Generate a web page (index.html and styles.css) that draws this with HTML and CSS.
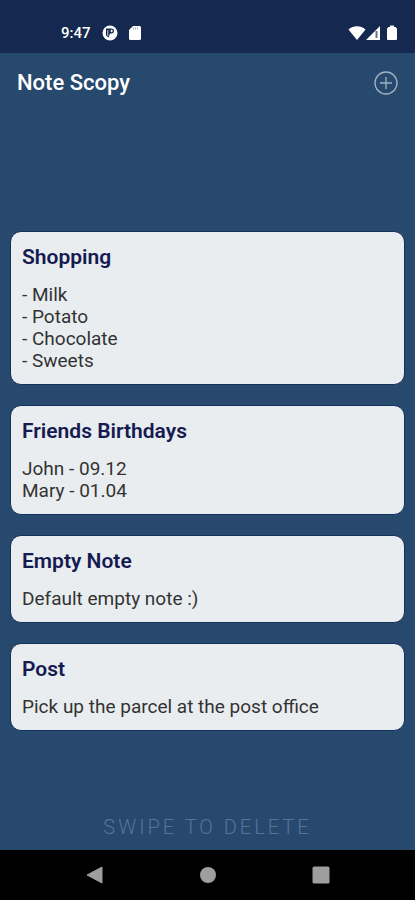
FILE: index.html
```html
<!DOCTYPE html>
<html lang="en">
  <head>
    <meta charset="utf-8" />
    <meta name="viewport" content="width=device-width, initial-scale=1.0" />
    <title>Note Scopy</title>
    <link rel="stylesheet" href="styles.css">
  </head>

  <body>
    <div class="status-bar">
      <div class="status-left">
        <span class="clock">9:47</span>
        <svg width="16" height="16" viewBox="0 0 16 16">
          <circle cx="8" cy="8" r="7.5" fill="#fff" />
          <path d="M4 3.500h5.500a2.500 2.500 0 0 1 2.500 2.500c0 1.800-1.500 2.600-3.500 2.600H8L6.500 12.500 4 10.500z" fill="#142850" />
          <path d="M5.800 5v6M9 5.200h1.200v1.500H9z" fill="#fff" stroke="#fff" stroke-width="0.800" />
        </svg>
        <svg width="12" height="16" viewBox="0 0 12 16">
          <path d="M4 1h6.500a1.500 1.500 0 0 1 1.500 1.500v11a1.500 1.500 0 0 1-1.500 1.500h-9A1.500 1.500 0 0 1 0 13.500V5z" fill="#fff" />
          <path d="M4.500 2.500v2M6.500 2.500v2M8.500 2.500v2" stroke="#a4adbe" />
        </svg>
      </div>
      <div class="status-right">
        <svg width="18" height="16" viewBox="0 0 18 16">
          <path d="M0.500 4.500C5.500 0.200 12.500 0.200 17.500 4.500L9 15z" fill="#fff" />
        </svg>
        <svg width="14" height="16" viewBox="0 0 14 16">
          <path d="M14 1v14H0z" fill="#fff" />
          <path d="M10.500 6v7" stroke="#65718b" stroke-width="2" />
        </svg>
        <svg class="battery" width="10" height="16" viewBox="0 0 10 16">
          <path d="M3 0.500h4V2h1.500L10 3.500V14a1 1 0 0 1-1 1H1a1 1 0 0 1-1-1V3.500L1.500 2H3z" fill="#fff" />
        </svg>
      </div>
    </div>

    <header class="app-bar">
      <h1>Note Scopy</h1>
      <button class="add-btn" type="button" aria-label="Add note">
        <svg width="24" height="24" viewBox="0 0 24 24" fill="none" stroke="#a3b2c2" stroke-width="1.300">
          <circle cx="12" cy="12" r="11" />
          <path d="M12 6v12M6 12h12" />
        </svg>
      </button>
    </header>

    <main class="notes-screen">
      <div class="notes">
        <article class="note">
          <h2>Shopping</h2>
          <p>- Milk<br />- Potato<br />- Chocolate<br />- Sweets</p>
        </article>
        <article class="note">
          <h2>Friends Birthdays</h2>
          <p>John - 09.12<br />Mary - 01.04</p>
        </article>
        <article class="note">
          <h2>Empty Note</h2>
          <p>Default empty note :)</p>
        </article>
        <article class="note">
          <h2>Post</h2>
          <p>Pick up the parcel at the post office</p>
        </article>
      </div>
      <p class="hint">SWIPE TO DELETE</p>
    </main>

    <nav class="nav-bar">
      <button type="button" aria-label="Back">
        <svg width="18" height="18" viewBox="0 0 18 18">
          <path d="M16 1v16L1 9z" fill="#9e9e9e" stroke="#9e9e9e" stroke-linejoin="round" />
        </svg>
      </button>
      <button type="button" aria-label="Home">
        <svg width="18" height="18" viewBox="0 0 18 18">
          <circle cx="9" cy="9" r="8" fill="#9e9e9e" />
        </svg>
      </button>
      <button type="button" aria-label="Recent apps">
        <svg width="18" height="18" viewBox="0 0 18 18">
          <rect x="0.500" y="0.500" width="17" height="17" rx="1.500" fill="#9e9e9e" />
        </svg>
      </button>
    </nav>
  </body>
</html>
```

FILE: styles.css
```css
* {
  box-sizing: border-box;
}

body {
  display: flex;
  flex-direction: column;
  min-height: 100vh;
  margin: 0;
  background-color: #27496d;
  font-family: Roboto, sans-serif;
}

h1,
h2,
p {
  margin: 0;
}

svg {
  display: block;
}

button {
  padding: 0;
  border: none;
  background: none;
  cursor: pointer;
}

/* system status bar */
.status-bar {
  display: flex;
  justify-content: space-between;
  align-items: flex-end;
  height: 53px;
  padding: 0 18px 12px 61px;
  background-color: #142850;
  color: #fff;
}

.status-left {
  display: flex;
  align-items: center;
  gap: 11px;
}

.status-right {
  display: flex;
}

.clock {
  font-size: 15px;
  font-weight: 500;
  line-height: 16px;
}

.battery {
  margin-left: 7px;
}

/* title and add button */
.app-bar {
  display: flex;
  justify-content: space-between;
  align-items: center;
  height: 59px;
  padding: 1px 17px 0;
  color: #fff;
}

.app-bar h1 {
  font-size: 22px;
  font-weight: 500;
  line-height: 24px;
}

/* notes stay centered, the hint sits in the lower free space */
.notes-screen {
  display: grid;
  grid-template-rows: 1fr auto 1fr;
  flex: 1;
  padding: 0 10px;
}

.notes {
  display: flex;
  flex-direction: column;
  grid-row: 2;
  gap: 20px;
}

.note {
  padding: 13px 11px 12px;
  border: 1px solid #16305c;
  border-radius: 11px;
  background-color: #e9edf0;
}

.note h2 {
  margin-bottom: 15px;
  color: #151b50;
  font-size: 21px;
  font-weight: 600;
  line-height: 24px;
}

.note p {
  color: #333;
  font-size: 19px;
  font-weight: 400;
  line-height: 22px;
}

.hint {
  grid-row: 3;
  align-self: end;
  padding: 12px 0;
  color: #54749c;
  font-size: 20px;
  font-weight: 300;
  letter-spacing: 3px;
  line-height: 22px;
  text-align: center;
}

/* system navigation */
.nav-bar {
  display: flex;
  justify-content: center;
  align-items: center;
  gap: 95px;
  height: 50px;
  background-color: #000;
}
```
